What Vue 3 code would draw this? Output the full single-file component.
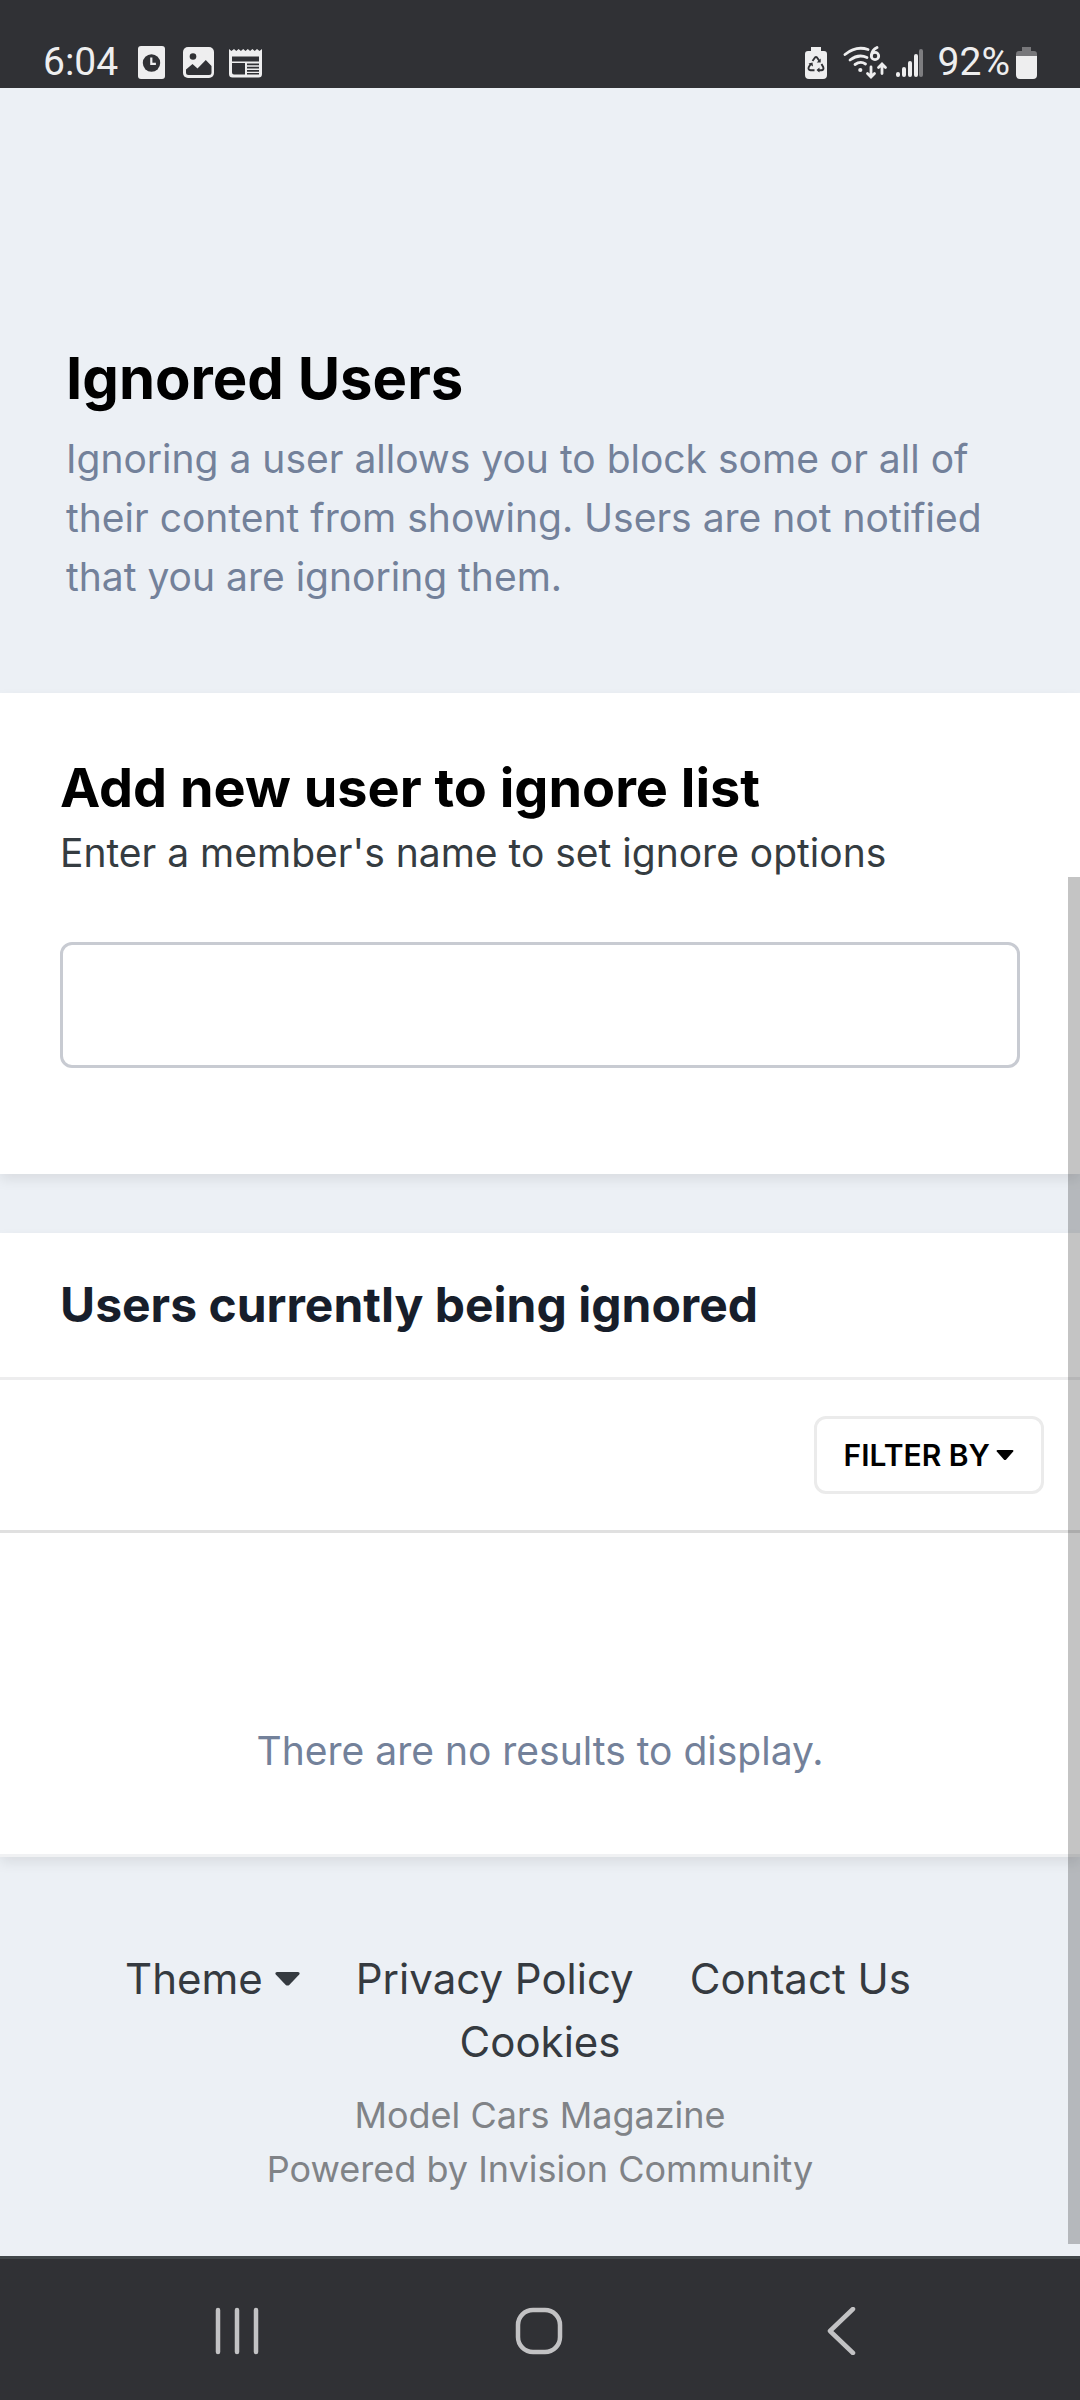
<script setup>
import { ref } from 'vue'

const member = ref('')
const bars = [
  { x: 1, y: 24, h: 5 },
  { x: 7, y: 19, h: 10 },
  { x: 13, y: 13, h: 16 },
  { x: 19, y: 6, h: 23 }
]
</script>

<template>
  <div class="screen">
    <header class="status">
      <div class="status-side">
        <span class="clock">6:04</span>
        <svg class="ic-clock" width="27" height="34" viewBox="0 0 27 34" aria-hidden="true">
          <rect width="27" height="33" rx="3" fill="#eeeeef" />
          <circle cx="13.5" cy="17" r="8.7" fill="#303135" />
          <path d="M13.3 11.5v6.3h4.6" fill="none" stroke="#eeeeef" stroke-width="2.2" />
        </svg>
        <svg class="ic-photo" width="31" height="31" viewBox="0 0 31 31" aria-hidden="true">
          <rect width="31" height="31" rx="5" fill="#eeeeef" />
          <circle cx="10" cy="9.5" r="3.3" fill="#303135" />
          <path d="M3 22.5l6.5-5.5 5 4.500 8.300-8.500 5.700 6v6.500a2.500 2.500 0 0 1-2.500 2.500H5.500A2.500 2.500 0 0 1 3 25.500z" fill="#303135" />
        </svg>
        <svg class="ic-news" width="33" height="30" viewBox="0 0 33 30" aria-hidden="true">
          <path d="M0 1l2.400 2L5 1l2.300 2L9.600 1l2.300 2 2.300-2 2.300 2 2.300-2 2.300 2 2.300-2 2.300 2L28 1l2.500 2L33 1v25a3.500 3.500 0 0 1-3.500 3.500h-26A3.500 3.500 0 0 1 0 26z" fill="#eeeeef" />
          <path d="M3 8.500h27v5H3zM3 15h13v11.500H5A2 2 0 0 1 3 24.500zM18 15.500h12v1.800H18zM18 18.700h12v1.800H18zM18 21.900h12v1.800H18zM18 25h12v1.500H18z" fill="#303135" />
        </svg>
      </div>
      <div class="status-side">
        <svg width="22" height="32" viewBox="0 0 22 32" aria-hidden="true">
          <path d="M6 0h10v4h3a3 3 0 0 1 3 3v21a4 4 0 0 1-4 4H4a4 4 0 0 1-4-4V7a3 3 0 0 1 3-3h3z" fill="#eeeeef" />
          <g fill="none" stroke="#303135" stroke-width="1.900" stroke-linejoin="round">
            <path d="M7.500 14l2.500-3.500q1-1 2 0l2.500 3.500" />
            <path d="M16.500 17l1.800 3.200q.8 2.800-2 3h-3.500" />
            <path d="M9.500 23.200H5.600q-2.800-.3-1.900-3l2-3.200" />
          </g>
          <path d="M15.700 11.500v4h-4zM14.500 20.500v5l-3-2.500zM3.500 16.500l4-1 .5 4z" fill="#303135" />
        </svg>
        <svg class="ic-wifi" width="45" height="33" viewBox="0 0 45 33" aria-hidden="true">
          <g fill="none" stroke="#eeeeef" stroke-linecap="round" stroke-width="2.800">
            <path d="M2 8.500Q13-.5 25 3.500" />
            <path d="M7 14q8.500-6.500 17-2.500" />
            <path d="M12 18.500q5.500-4 10.500-.5" />
            <path d="M28 21v9.500M24.500 27.500L28 31l3.500-3.500" />
            <path d="M39 27.500v-9M35.500 21.500L39 18l3.500 3.500" />
            <path d="M34 1.500q-5 2.500-5.500 7.500" />
            <circle cx="32" cy="10" r="3.700" />
          </g>
          <circle cx="17.300" cy="24" r="2.100" fill="#eeeeef" />
        </svg>
        <svg class="ic-signal" width="29" height="30" viewBox="0 0 29 30" aria-hidden="true">
          <rect v-for="b in bars" :key="b.x" :x="b.x" :y="b.y" width="4" :height="b.h" rx="2" fill="#eeeeef" />
          <rect x="24" y="1" width="4" height="28" rx="2" fill="#7d7d80" />
        </svg>
        <span class="percent">92%</span>
        <svg class="ic-batt" width="21" height="32" viewBox="0 0 21 32" aria-hidden="true">
          <path d="M6 0h9v4h3a3 3 0 0 1 3 3v3H0V7a3 3 0 0 1 3-3h3z" fill="#77777a" />
          <path d="M0 9h21v19a4 4 0 0 1-4 4H4a4 4 0 0 1-4-4z" fill="#eeeeef" />
        </svg>
      </div>
    </header>

    <main class="page">
      <section class="intro">
        <h1>Ignored Users</h1>
        <p>Ignoring a user allows you to block some or all of their content from showing. Users are not notified that you are ignoring them.</p>
      </section>

      <section class="card add">
        <h2>Add new user to ignore list</h2>
        <label for="member">Enter a member's name to set ignore options</label>
        <input id="member" v-model="member" type="text" autocomplete="off" />
      </section>

      <section class="card list">
        <h2 class="list-title">Users currently being ignored</h2>
        <div class="toolbar">
          <button type="button" class="filter">
            FILTER BY
            <svg width="18" height="11" viewBox="0 0 18 11" aria-hidden="true"><path d="M1.500 0h15q1.500.4.700 1.500l-7 8q-1.200 1.200-2.400 0l-7-8Q0 .4 1.500 0z" fill="currentColor" /></svg>
          </button>
        </div>
        <p class="empty">There are no results to display.</p>
      </section>

      <footer class="footer">
        <nav class="links">
          <a href="#theme">Theme <svg width="25" height="14" viewBox="0 0 25 14" aria-hidden="true"><path d="M2 0h21q2.500.6 1.200 2.500l-9.700 10.200q-2 1.800-4 0L.8 2.500Q-.5.6 2 0z" fill="currentColor" /></svg></a>
          <a href="#privacy">Privacy Policy</a>
          <a href="#contact">Contact Us</a>
          <a href="#cookies">Cookies</a>
        </nav>
        <p class="credit">Model Cars Magazine<br />Powered by Invision Community</p>
      </footer>
      <div class="scroll-thumb"></div>
    </main>

    <nav class="system">
      <button type="button" aria-label="Recent apps">
        <svg width="48" height="48" viewBox="0 0 48 48"><path d="M5 3v42M24 3v42M43 3v42" fill="none" stroke="#c2c2c4" stroke-width="4.500" stroke-linecap="round" /></svg>
      </button>
      <button type="button" aria-label="Home">
        <svg width="48" height="48" viewBox="0 0 48 48"><rect x="3" y="3" width="42" height="42" rx="15" fill="none" stroke="#c2c2c4" stroke-width="4.500" /></svg>
      </button>
      <button type="button" aria-label="Back">
        <svg width="48" height="48" viewBox="0 0 48 48"><path d="M36 2L13 24l23 22" fill="none" stroke="#c2c2c4" stroke-width="4.500" stroke-linecap="round" stroke-linejoin="round" /></svg>
      </button>
    </nav>
  </div>
</template>

<style>
body {
  margin: 0;
  background: #ecf0f5;
}
</style>

<style scoped>
.screen {
  min-height: 100vh;
  display: flex;
  flex-direction: column;
  background: #ecf0f5;
  color: #353c41;
  font-family: Inter, "Liberation Sans", sans-serif;
  font-size: 39px;
}
h1,
h2,
p {
  margin: 0;
}
svg {
  display: block;
  flex: none;
}
.status {
  display: flex;
  justify-content: space-between;
  align-items: center;
  height: 51px;
  padding: 37px 43px 0;
  background: #303135;
  color: #eeeeef;
  font-family: Roboto, sans-serif;
  line-height: 51px;
}
.status-side {
  display: flex;
  align-items: center;
}
.ic-clock {
  margin-left: 20px;
}
.ic-photo {
  margin-left: 18px;
}
.ic-news {
  margin-left: 15px;
}
.ic-wifi {
  margin-left: 16px;
}
.ic-signal {
  margin-left: 7px;
}
.percent {
  margin-left: 14px;
}
.ic-batt {
  margin-left: 6px;
}
.page {
  position: relative;
  flex: 1;
  overflow: hidden;
}
.intro {
  padding: 254px 66px 87px;
}
h1 {
  color: #000;
  font-size: 58px;
  font-weight: 700;
  line-height: 72px;
}
.intro p {
  margin-top: 15px;
  color: #73819a;
  line-height: 59px;
}
.card {
  background: #fff;
  box-shadow: 0 6px 12px rgba(0, 0, 0, 0.08);
}
.add {
  padding: 60px 60px 106px;
}
.add h2 {
  color: #000;
  font-size: 54px;
  font-weight: 700;
  line-height: 70px;
}
.add label {
  display: block;
  line-height: 59px;
}
.add input {
  display: block;
  box-sizing: border-box;
  width: 100%;
  height: 126px;
  margin-top: 60px;
  padding: 0 24px;
  border: 3px solid #c8cbd2;
  border-radius: 12px;
  background: #fff;
  color: inherit;
  font: inherit;
}
.list {
  margin-top: 59px;
  border-bottom: 3px solid #f0f1f3;
}
.list-title {
  padding: 36px 60px;
  border-bottom: 3px solid #ededee;
  color: #171e2b;
  font-size: 48px;
  font-weight: 700;
  line-height: 72px;
}
.toolbar {
  display: flex;
  justify-content: flex-end;
  padding: 36px;
  border-bottom: 3px solid #e0e0e0;
}
.filter {
  display: flex;
  align-items: center;
  gap: 6px;
  height: 78px;
  padding: 0 27px;
  border: 3px solid #ebebeb;
  border-radius: 12px;
  background: #fff;
  color: #000;
  font: 600 30px/36px Inter, "Liberation Sans", sans-serif;
}
.empty {
  padding: 188px 60px 74px;
  color: #73819a;
  line-height: 59px;
  text-align: center;
}
.footer {
  padding: 90px 45px 60px;
  text-align: center;
}
.links {
  display: flex;
  flex-wrap: wrap;
  justify-content: center;
  column-gap: 12px;
  padding: 0 15px;
  font-size: 42px;
  line-height: 63px;
}
.links a {
  display: flex;
  align-items: center;
  gap: 12px;
  color: #353a40;
  text-decoration: none;
}
.links a:not(:last-child) {
  margin-right: 44px;
}
.credit {
  margin-top: 15px;
  color: #808387;
  font-size: 36px;
  line-height: 54px;
}
.scroll-thumb {
  position: absolute;
  top: 36.4%;
  right: 0;
  bottom: 12px;
  width: 12px;
  background: rgba(0, 0, 0, 0.23);
}
.system {
  display: grid;
  grid-template-columns: repeat(3, 1fr);
  padding: 48px 88px 45px 86px;
  border-top: 3px solid #42474a;
  background: #303135;
}
.system button {
  display: flex;
  justify-content: center;
  padding: 0;
  border: 0;
  background: none;
}
</style>
